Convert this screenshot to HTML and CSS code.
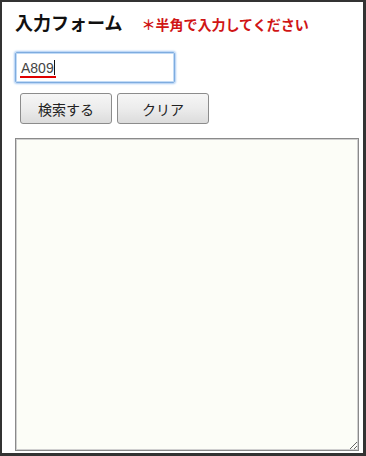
FILE: index.html
```html
<!DOCTYPE html>
<html lang="ja">
<head>
<meta charset="utf-8">
<title>入力フォーム</title>
<link rel="stylesheet" href="styles.css">
</head>
<body>
<div class="frame">
  <div class="heading">
    <h1 class="title">入力フォーム</h1>
    <span class="note">＊半角で入力してください</span>
  </div>
  <div class="field">
    <span class="typed">A809</span><span class="caret"></span>
  </div>
  <div class="actions">
    <button class="btn" type="button">検索する</button>
    <button class="btn" type="button">クリア</button>
  </div>
  <textarea class="output"></textarea>
</div>
</body>
</html>
```

FILE: styles.css
```css
html, body {
  margin: 0;
  padding: 0;
  background: #ffffff;
}

.frame {
  box-sizing: border-box;
  width: 366px;
  height: 456px;
  border-style: solid;
  border-color: #333333;
  border-width: 2px 3px 3px 2px;
  padding: 8px 4px 0 13px;
  display: flex;
  flex-direction: column;
  font-family: "Liberation Sans", "Noto Sans CJK JP", sans-serif;
}

.heading {
  display: flex;
  align-items: baseline;
  gap: 19px;
  height: 24px;
}

.title {
  margin: 0;
  font-size: 18px;
  line-height: 24px;
  font-weight: bold;
  color: #111111;
  font-family: "Noto Sans CJK JP", sans-serif;
}

.note {
  font-size: 14px;
  font-weight: bold;
  color: #d01515;
  font-family: "Noto Sans CJK JP", sans-serif;
}

.field {
  box-sizing: border-box;
  margin-top: 18px;
  width: 160px;
  height: 31px;
  border: 1px solid #7eacdf;
  box-shadow: 0 0 2px 1px #a8cbf3, inset 0 0 0 1px #c2dbf6;
  border-radius: 2px;
  padding: 0 0 0 6px;
  display: flex;
  align-items: center;
  font-family: "Liberation Sans", Arial, sans-serif;
  font-size: 14px;
  color: #444444;
}

.typed {
  line-height: 16px;
  border-bottom: 2px solid #e00000;
  padding: 0 2px 0 1px;
  margin-left: -2px;
  margin-top: 3px;
}

.caret {
  width: 1px;
  height: 15px;
  background: #111111;
  margin-left: -2px;
  margin-top: -1px;
}

.actions {
  display: flex;
  gap: 5px;
  margin: 10px 0 0 5px;
}

.btn {
  box-sizing: border-box;
  width: 92px;
  height: 31px;
  border: 1px solid #8c8c8c;
  border-radius: 3px;
  background: linear-gradient(#f6f6f6 0%, #ececec 50%, #dcdcdc 100%);
  font-family: "Noto Sans CJK JP", sans-serif;
  font-size: 14px;
  color: #222222;
  padding: 0;
}

.output {
  box-sizing: border-box;
  margin-top: 14px;
  width: 344px;
  height: 313px;
  border: 1px solid #8a8a8a;
  box-shadow: inset 0 0 0 1px #cfcfcf;
  background: #fcfdf7;
  padding: 2px;
  resize: both;
}
```
